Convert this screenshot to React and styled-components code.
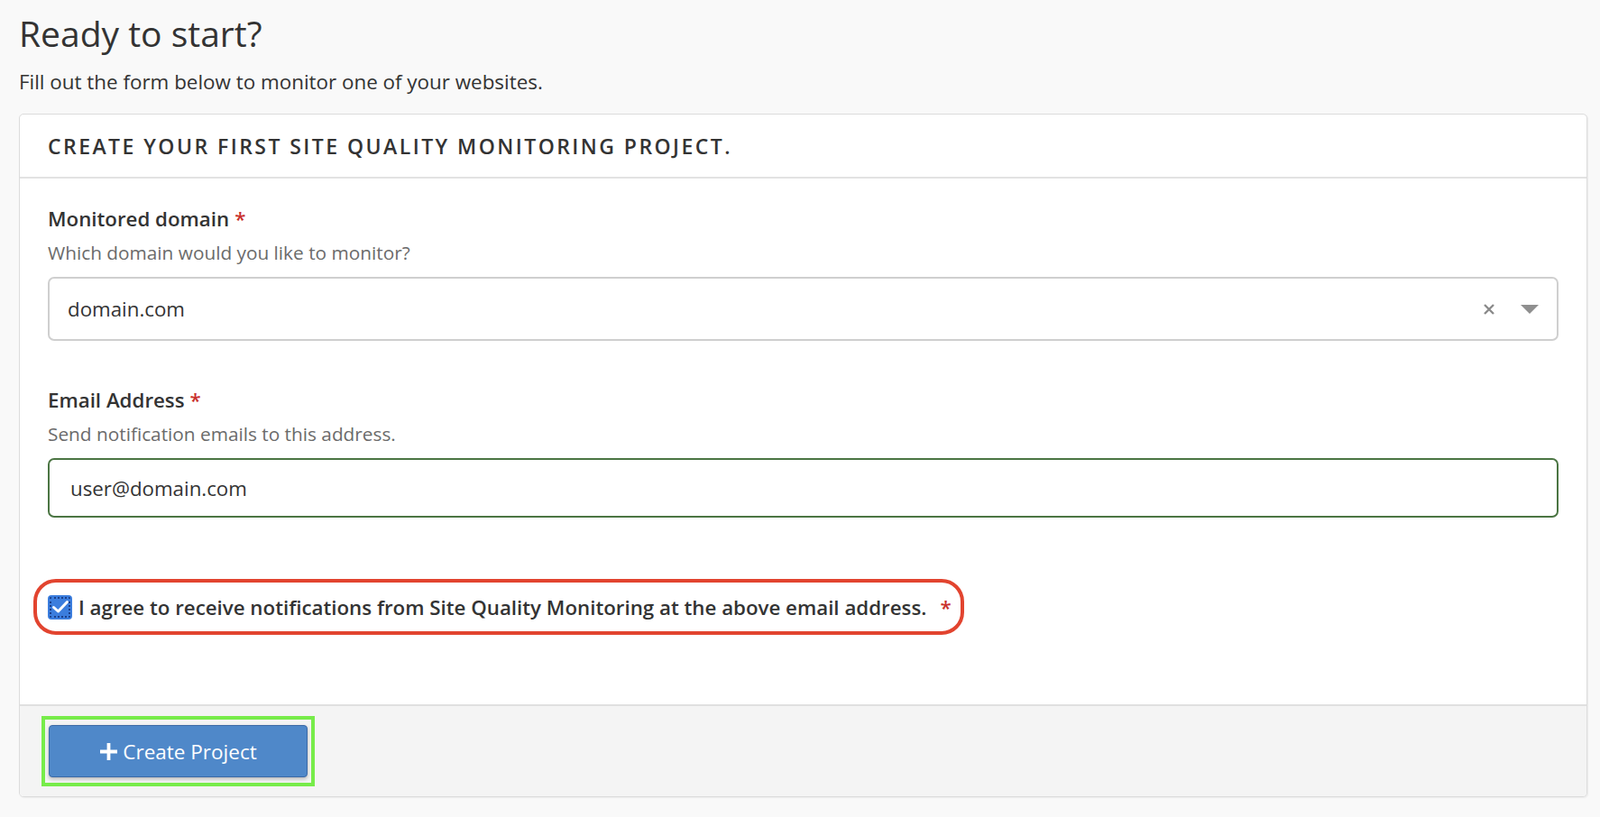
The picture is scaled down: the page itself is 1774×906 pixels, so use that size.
import React from "react";
import styled, { createGlobalStyle } from "styled-components";

const Global = createGlobalStyle`
  html, body { margin: 0; padding: 0; background: #f9f9f9; }
  body { font-family: "Open Sans", "Noto Sans", sans-serif; color: #333; }
  * { box-sizing: border-box; }
`;

const Page = styled.div`
  padding: 12px 14px 22px 21px;
`;

const Title = styled.h1`
  margin: 0;
  font-size: 39px;
  line-height: 50px;
  font-weight: 400;
  color: #333;
`;

const Lead = styled.p`
  margin: 16px 0 22px;
  font-size: 22.4px;
  line-height: 26px;
  color: #333;
`;

const Card = styled.section`
  background: #fff;
  border: 1px solid #dcdcdc;
  border-radius: 5px;
  box-shadow: 1px 1px 2px rgba(0,0,0,0.06);
  overflow: hidden;
`;

const CardHeader = styled.header`
  height: 71px;
  display: flex;
  align-items: center;
  padding: 0 31px;
  border-bottom: 2px solid #e2e2e2;
  font-size: 23px;
  font-weight: 600;
  letter-spacing: 2.45px;
  text-transform: uppercase;
  color: #333;
`;

const CardBody = styled.div`
  padding: 31px 31px 77px;
  display: flex;
  flex-direction: column;
`;

const Field = styled.div`
  display: flex;
  flex-direction: column;
  margin-bottom: ${(p) => p.$gap || 0}px;
`;

const Label = styled.label`
  font-size: 22.3px;
  line-height: 28px;
  font-weight: 600;
  color: #333;
`;

const Req = styled.span`
  color: #c9302c;
  margin-left: ${(p) => p.$gap || 6}px;
`;

const Help = styled.div`
  margin-top: 10px;
  font-size: 20.8px;
  line-height: 27px;
  color: #6b6b6b;
`;

const SelectBox = styled.div`
  margin-top: 13px;
  height: 71px;
  border: 2px solid #cfcfcf;
  border-radius: 7px;
  display: flex;
  align-items: center;
  padding: 0 20px 0 20px;
  font-size: 22.3px;
  color: #333;
`;

const SelectValue = styled.span`
  flex: 1;
`;

const ClearX = styled.span`
  display: flex;
  margin-right: 28px;
`;

const Caret = styled.span`
  width: 0;
  height: 0;
  border-left: 10px solid transparent;
  border-right: 10px solid transparent;
  border-top: 10px solid #8f8f8f;
`;

const TextInput = styled.input`
  margin-top: 13px;
  height: 66px;
  border: 2px solid #4b7543;
  border-radius: 7px;
  padding: 0 23px;
  font-family: inherit;
  font-size: 22.3px;
  color: #333;
  background: #fff;
  outline: none;
`;

const ConsentRing = styled.div`
  align-self: flex-start;
  margin-top: 68px;
  margin-left: -16px;
  height: 62px;
  border: 4px solid #e2442f;
  border-radius: 25px;
  display: flex;
  align-items: center;
  padding: 0 10px 0 12px;
`;

const Consent = styled.label`
  display: flex;
  align-items: center;
  gap: 7px;
  font-size: 22.3px;
  font-weight: 600;
  color: #333;
`;

const Check = styled.span`
  width: 27px;
  height: 27px;
  border-radius: 4px;
  background: #3b7ddd;
  outline: 2px dotted #1b3f8a;
  outline-offset: -4px;
  display: flex;
  align-items: center;
  justify-content: center;
`;

const CardFooter = styled.footer`
  background: #f4f4f4;
  border-top: 2px solid #e0e0e0;
  padding: 11px 27px 11px 24px;
`;

const Highlight = styled.div`
  display: inline-flex;
  border: 4px solid #77ec4a;
  padding: 6px 4px;
`;

const Button = styled.button`
  width: 287px;
  height: 58px;
  border: 1px solid #3c6aa6;
  border-radius: 4px;
  background: #4f88c9;
  color: #fff;
  font-family: inherit;
  font-size: 22.5px;
  display: flex;
  align-items: center;
  justify-content: center;
  gap: 5px;
  box-shadow: 0 2px 4px rgba(0,0,0,0.25);
  cursor: pointer;
`;

export default function App() {
  return (
    <>
      <Global />
      <Page>
        <Title>Ready to start?</Title>
        <Lead>Fill out the form below to monitor one of your websites.</Lead>
        <Card>
          <CardHeader>Create your first Site Quality Monitoring project.</CardHeader>
          <CardBody>
            <Field $gap={52}>
              <Label>Monitored domain<Req>*</Req></Label>
              <Help>Which domain would you like to monitor?</Help>
              <SelectBox>
                <SelectValue>domain.com</SelectValue>
                <ClearX>
                  <svg width="14" height="14" viewBox="0 0 14 14">
                    <path d="M2 2L12 12M12 2L2 12" stroke="#8a8a8a" strokeWidth="2.4" />
                  </svg>
                </ClearX>
                <Caret />
              </SelectBox>
            </Field>
            <Field>
              <Label>Email Address<Req>*</Req></Label>
              <Help>Send notification emails to this address.</Help>
              <TextInput defaultValue="user@domain.com" />
            </Field>
            <ConsentRing>
              <Consent>
                <Check>
                  <svg width="20" height="16" viewBox="0 0 20 16">
                    <path d="M2.5 8.5 L7.5 13 L17.5 2.5" fill="none" stroke="#fff" strokeWidth="3" strokeLinecap="round" strokeLinejoin="round" />
                  </svg>
                </Check>
                I agree to receive notifications from Site Quality Monitoring at the above email address.
                <Req $gap={8}>*</Req>
              </Consent>
            </ConsentRing>
          </CardBody>
          <CardFooter>
            <Highlight>
              <Button>
                <svg width="21" height="21" viewBox="0 0 21 21">
                  <path d="M10.5 1v19M1 10.5h19" stroke="#fff" strokeWidth="3.8" />
                </svg>
                Create Project
              </Button>
            </Highlight>
          </CardFooter>
        </Card>
      </Page>
    </>
  );
}
